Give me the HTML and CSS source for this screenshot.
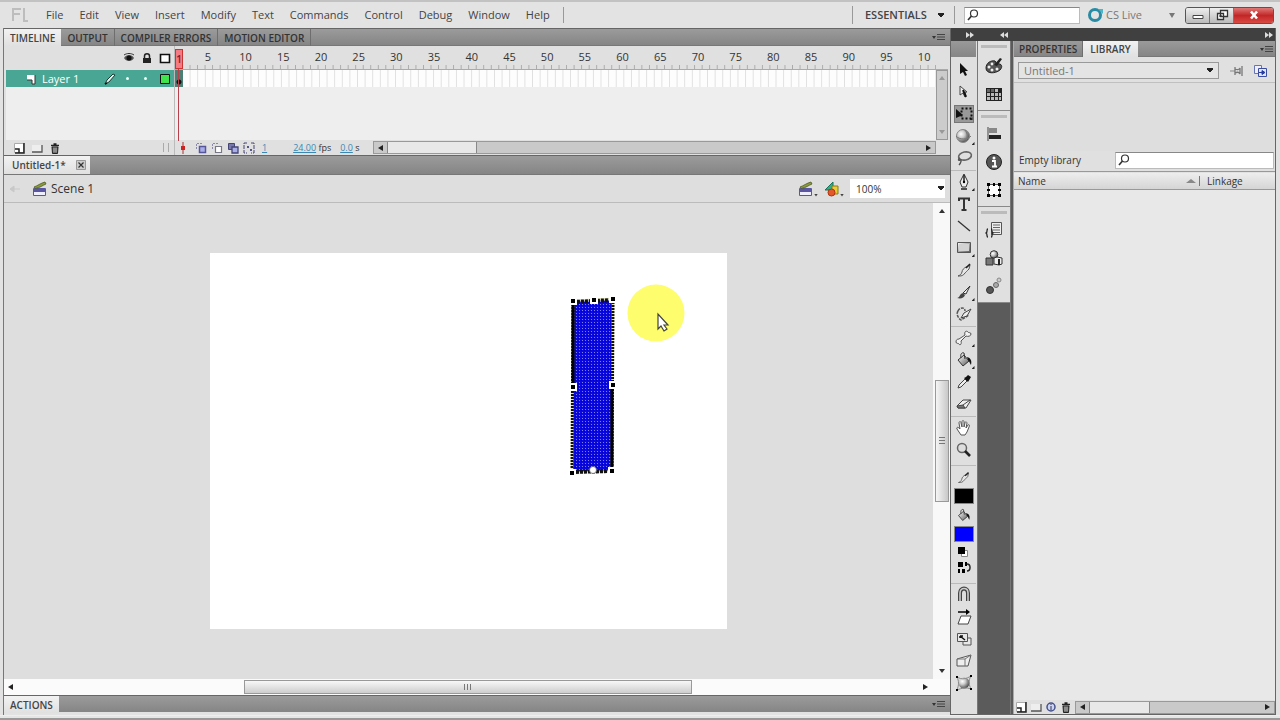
FILE: index.html
```html
<!DOCTYPE html>
<html lang="en">
<head>
<meta charset="utf-8">
<title>Untitled-1</title>
<link rel="stylesheet" href="styles.css">
</head>
<body>
<svg class="defs" aria-hidden="true">
  <defs>
    <linearGradient id="steel" x1="0" y1="0" x2="1" y2="1"><stop offset="0" stop-color="#fff"/><stop offset="1" stop-color="#555"/></linearGradient>
    <radialGradient id="ball" cx=".35" cy=".35" r=".7"><stop offset="0" stop-color="#fff"/><stop offset=".4" stop-color="#ccc"/><stop offset="1" stop-color="#444"/></radialGradient>
    <pattern id="dots" width="3" height="3" patternUnits="userSpaceOnUse"><rect width="3" height="3" fill="#0a08e0"/><rect width="1" height="1" fill="#7d7df6"/><rect x="2" y="1" width="1" height="1" fill="#0500b4"/></pattern>
    <symbol id="mag" viewBox="0 0 14 14"><circle cx="8" cy="5.500" r="3.500" fill="#fff" stroke="#333" stroke-width="1.200"/><path d="M5.500 8 2 12" stroke="#333" stroke-width="1.700"/></symbol>
    <symbol id="flyout" viewBox="0 0 14 10"><path d="M0 4h4L2 7z" fill="#333"/><path d="M5 2.500h8M5 5h8M5 7.500h8" stroke="#444"/></symbol>
    <symbol id="newlayer" viewBox="0 0 12 12"><path d="M1.500 1.500h9v9h-9z" fill="#fff" stroke="#aaa"/><path d="M2 11h9V1" fill="none" stroke="#222" stroke-width="1.500"/><path d="M2 7h4v4" fill="none" stroke="#222" stroke-width="1.500"/></symbol>
    <symbol id="folder" viewBox="0 0 12 12"><path d="M1 3h10v7H1z" fill="#eee"/><path d="M1 10h10V3" fill="none" stroke="#555" stroke-width="1.300"/></symbol>
    <symbol id="trash" viewBox="0 0 12 12"><path d="M2 3.500h8M4.500 2h3" stroke="#222" stroke-width="1.300"/><path d="M3 5h6l-.500 6.500h-5z" fill="#555" stroke="#222"/><path d="M5 5.500v5M7 5.500v5" stroke="#ddd" stroke-width=".800"/></symbol>
    <symbol id="clap" viewBox="0 0 16 16"><path d="M1.500 7.500h12v7h-12z" fill="#eef" stroke="#5b56a3"/><path d="M1 8h13v3H1z" fill="#5b56a3"/><path d="M2 6C5 5 9 2 13 1l1 2C11 4 8 7 3 7.500z" fill="#8a9a3c" stroke="#4d591d" stroke-width=".800"/></symbol>
    <symbol id="pencil" viewBox="0 0 18 18"><path d="M3 15c2-1 3-1 4-4 0-2 2-4 4-5l4-2-1 4c-2 2-3 3-4 4-2 3-4 3-7 3z" fill="#e6e6e6" stroke="#555"/><path d="m11 7 4-4" stroke="#222" stroke-width="1.600"/></symbol>
    <symbol id="bucket" viewBox="0 0 18 18"><path d="m3 9 6-5 5 6-6 5z" fill="url(#steel)" stroke="#333"/><path d="M6 7c-1-4 1-6 3-5l1 6" fill="none" stroke="#333"/><path d="M12 6c4 1 5 4 4 8-1-1-1-3-3-5z" fill="#111"/></symbol>
  </defs>
</svg>

<header class="menubar">
  <svg class="logo" viewBox="0 0 18 16"><path d="M2 14V2h8M2 7h7M13 1v13h4" fill="none" stroke="#bdbdbd" stroke-width="2"/></svg>
  <nav class="menus">
    <button>File</button><button>Edit</button><button>View</button><button>Insert</button><button>Modify</button><button>Text</button><button>Commands</button><button>Control</button><button>Debug</button><button>Window</button><button>Help</button>
  </nav>
  <div class="bar-end">
    <select class="workspace" aria-label="Workspace"><option>ESSENTIALS</option></select>
    <label class="search top-search"><svg><use href="#mag"/></svg><input type="text" aria-label="Search help"></label>
    <button class="cslive"><svg viewBox="0 0 18 18"><circle cx="8" cy="9" r="5.500" fill="none" stroke="#278ba3" stroke-width="3"/><path d="M11 3h5v5z" fill="#4fb4c7"/></svg>CS Live<i class="caret"></i></button>
    <div class="window-buttons">
      <button aria-label="Minimize"><svg viewBox="0 0 16 12"><path d="M3 6.500h10v3H3z" fill="#fff" stroke="#444"/></svg></button>
      <button aria-label="Restore"><svg viewBox="0 0 16 12"><path d="M6.500 1.500h7v6h-7zM3.500 4.500h6v6h-6z" fill="#fff" stroke="#333" stroke-width="1.300"/><path d="M5 7h3" stroke="#333"/></svg></button>
      <button class="close" aria-label="Close"><svg viewBox="0 0 16 12"><path d="m5 2.500 6 7m0-7-6 7" stroke="#fff" stroke-width="2.600"/></svg></button>
    </div>
  </div>
</header>

<div class="workarea">
  <main class="editor">
    <div class="tabbar">
      <button class="tab active">TIMELINE</button><button class="tab">OUTPUT</button><button class="tab">COMPILER ERRORS</button><button class="tab">MOTION EDITOR</button>
      <button class="flyout" aria-label="Panel menu"><svg><use href="#flyout"/></svg></button>
    </div>

    <section class="timeline">
      <div class="layers">
        <div class="layer-head">
          <svg viewBox="0 0 12 12"><path d="M1 6c2-4 8-4 10 0-2 4-8 4-10 0z" fill="#555"/><circle cx="6" cy="6" r="2.500" fill="#111"/><path d="M1 3c3-2 7-2 10 0" fill="none" stroke="#333"/></svg>
          <svg viewBox="0 0 12 12"><path d="M2 6h8v5H2z" fill="#222"/><path d="M3.500 6V4c0-3 5-3 5 0v2" fill="none" stroke="#222" stroke-width="1.500"/></svg>
          <svg viewBox="0 0 12 12"><path d="M1.500 2.500h9v8h-9z" fill="#fff" stroke="#111" stroke-width="1.600"/></svg>
        </div>
        <div class="layer">
          <svg class="page" viewBox="0 0 12 12"><path d="M2 2h8v9H7V7H2z" fill="#fff"/><path d="M10 2v9H7V7H2" fill="none" stroke="#333"/></svg>
          <span class="layer-name">Layer 1</span>
          <svg viewBox="0 0 12 12"><path d="m1 11 2-4 6-6 2 1-6 7z" fill="#e5f1ed" stroke="#153d34"/><path d="m1 11 2-1" stroke="#111" stroke-width="1.500"/></svg>
          <i class="dot"></i><i class="dot"></i>
          <svg viewBox="0 0 12 12"><path d="M1.500 1.500h9v9h-9z" fill="#3fe34b" stroke="#111"/></svg>
        </div>
        <div class="layer-foot">
          <button aria-label="New layer"><svg><use href="#newlayer"/></svg></button>
          <button aria-label="New folder"><svg><use href="#folder"/></svg></button>
          <button aria-label="Delete"><svg><use href="#trash"/></svg></button>
          <i class="splitter"></i>
        </div>
      </div>
      <div class="frames">
        <div class="ruler">
          <span>5</span><span>10</span><span>15</span><span>20</span><span>25</span><span>30</span><span>35</span><span>40</span><span>45</span><span>50</span><span>55</span><span>60</span><span>65</span><span>70</span><span>75</span><span>80</span><span>85</span><span>90</span><span>95</span><span>10</span>
          <div class="ticks"></div>
        </div>
        <div class="frame-body">
          <div class="frame-main">
            <div class="frame-row"><i class="keyframe"></i></div>
          </div>
          <div class="slim-scroll"><svg viewBox="0 0 8 8"><path d="M1 6h6L4 2z"/></svg><svg viewBox="0 0 8 8"><path d="M1 2h6L4 6z"/></svg></div>
        </div>
        <div class="playhead"><b>1</b></div>
        <div class="frame-foot">
          <svg viewBox="0 0 12 12"><path d="M6 0v12" stroke="#a33"/><path d="M4 4h4v4H4z" fill="#c22"/></svg>
          <svg viewBox="0 0 12 12"><path d="M1.500 7V1.500H8" fill="none" stroke="#88a" stroke-dasharray="2 1"/><path d="M4.500 4.500h6v6h-6z" fill="#aaaee6" stroke="#56569c" stroke-width="1.500"/></svg>
          <svg viewBox="0 0 12 12"><path d="M1.500 7V1.500H8" fill="none" stroke="#88a" stroke-dasharray="2 1"/><path d="M4.500 4.500h6v6h-6z" fill="#fff" stroke="#778" stroke-width="1.200"/></svg>
          <svg viewBox="0 0 12 12"><path d="M1.500 1.500h6v6h-6z" fill="#77a" stroke="#447"/><path d="M5 5h6v6H5z" fill="#aaaee6" stroke="#447" stroke-width="1.300"/></svg>
          <svg viewBox="0 0 12 12"><path d="M4 1H1v10h3M8 1h3v10H8" fill="none" stroke="#447" stroke-dasharray="4 1"/><path d="M4 4h2v2H4zm3 3h2v2H7z" fill="#558"/></svg>
          <button class="value current">1</button>
          <span class="reading"><button class="value">24.00</button> fps</span>
          <span class="reading"><button class="value">0.0</button> s</span>
          <div class="flat-scroll"><i class="arrow left"></i><i class="thumb"></i><i class="arrow right"></i></div>
        </div>
      </div>
    </section>

    <div class="tabbar doc-tabs">
      <div class="tab active">Untitled-1*<button aria-label="Close document"><svg viewBox="0 0 10 10"><path d="M.500.500h9v9h-9z" fill="#ccc" stroke="#999"/><path d="m2.500 2.500 5 5m0-5-5 5" stroke="#333" stroke-width="1.200"/></svg></button></div>
    </div>

    <div class="scenebar">
      <svg class="back" viewBox="0 0 12 12"><path d="M0 6h10M0 6l4-3v6z" stroke="#c8c8c8" fill="#c8c8c8"/></svg>
      <svg><use href="#clap"/></svg>
      <span>Scene 1</span>
      <button class="scene-pick" aria-label="Edit scene"><svg><use href="#clap"/></svg><i></i></button>
      <button class="scene-pick" aria-label="Edit symbols"><svg viewBox="0 0 16 16"><path d="M1 9 9 1v8z" fill="#2fae86" stroke="#187257"/><path d="M8 5h6v8H8z" fill="#e6cf33" stroke="#8b7b1a"/><circle cx="7.500" cy="11.500" r="3.500" fill="#e4592c" stroke="#a83613"/></svg><i></i></button>
      <select class="zoom" aria-label="Zoom"><option>100%</option></select>
    </div>

    <div class="stage-wrap">
      <div class="stage">
        <div class="canvas">
          <svg viewBox="0 0 517 376">
            <path d="m364 48 38-1-1 171-38 1z" fill="url(#dots)"/>
            <path d="m363 48 40-2-1 172-40 2z" fill="none" stroke="#d8d890" stroke-width="3" opacity=".6"/>
            <path d="m363 48-1 172" stroke="#111" stroke-width="3" stroke-dasharray="2 1"/>
            <path d="m403 46-1 172" stroke="#111" stroke-width="3" stroke-dasharray="2 1"/>
            <path d="M363 50v81M402 136v80" stroke="#000" stroke-width="3"/>
            <path d="m363 49 40-2M362 219l40-1" stroke="#111" stroke-width="4" stroke-dasharray="3 1"/>
            <g fill="#000" stroke="#fff" stroke-width="2"><path d="M360 45h6v6h-6zM381 44h6v6h-6zM400 43h6v6h-6zM360 131h6v6h-6zM400 129h6v6h-6zM359 217h6v6h-6zM399 215h6v6h-6z"/></g>
            <circle cx="383" cy="217" r="3.500" fill="#fff" stroke="#555" stroke-width=".700"/>
            <circle cx="446" cy="60" r="28.500" fill="#fdfd6e"/>
            <path d="m448 61v15l3-3 3 5 3-2-3-4h4z" fill="#fff" stroke="#443" stroke-width="1.200"/>
          </svg>
        </div>
      </div>
      <div class="vscroll"><i class="arrow up"></i><i class="space before"></i><i class="thumb"></i><i class="space after"></i><i class="arrow down"></i></div>
    </div>
    <div class="hscroll"><i class="arrow left"></i><i class="space before"></i><i class="thumb"></i><i class="space after"></i><i class="arrow right"></i></div>

    <div class="tabbar actions"><button class="tab active">ACTIONS</button><button class="flyout" aria-label="Panel menu"><svg><use href="#flyout"/></svg></button></div>
  </main>

  <aside class="dock">
    <div class="strip">
      <svg viewBox="0 0 8 6"><path d="M0 0v6l4-3zM4 0v6l4-3z" fill="#ddd"/></svg>
      <svg viewBox="0 0 8 6"><path d="M4 0v6L0 3zM8 0v6L4 3z" fill="#ddd"/></svg>
      <svg class="last" viewBox="0 0 8 6"><path d="M0 0v6l4-3zM4 0v6l4-3z" fill="#ddd"/></svg>
    </div>

    <div class="columns">
    <div class="tools">
      <div class="tool-head"></div>
      <div class="group">
        <button aria-label="Selection"><svg viewBox="0 0 18 18"><path d="M5 2v11l3-2 2 4 2-1-2-4h3z" fill="#111"/></svg></button>
        <button aria-label="Subselection"><svg viewBox="0 0 18 18"><path d="M5 3v9l3-2 2 4 1-1-1-4h2z" fill="#eee" stroke="#444"/><path d="m8 7 3 7" stroke="#111" stroke-width="2"/></svg></button>
        <button class="on more" aria-label="Free transform"><svg viewBox="0 0 18 18"><path d="M1 4v9l7-3z" fill="#111"/><path d="M6.500 3.500h10v10h-10z" fill="none" stroke="#111" stroke-width="2" stroke-dasharray="2 2"/></svg></button>
        <button class="more" aria-label="3D rotation"><svg viewBox="0 0 18 18"><circle cx="8" cy="9" r="6.500" fill="url(#ball)" stroke="#888"/><path d="M1 9c3 4 12 4 15 0" fill="none" stroke="#777"/><path d="M10 3c3 4 3 8 0 12" fill="none" stroke="#777"/></svg></button>
        <button aria-label="Lasso"><svg viewBox="0 0 18 18"><ellipse cx="10" cy="7" rx="6.500" ry="4" transform="rotate(-12 10 7)" fill="none" stroke="#666" stroke-width="1.600"/><path d="M5 9c-2 1-2 3 0 2s1 3-1 5" fill="none" stroke="#555" stroke-width="1.400"/></svg></button>
      </div>
      <div class="group">
        <button class="more" aria-label="Pen"><svg viewBox="0 0 18 18"><path d="M9 1 5 9l2 5h4l2-5z" fill="#eee" stroke="#333"/><path d="M9 2v7M6 16h6" stroke="#222" stroke-width="1.500"/><circle cx="9" cy="9" r="1.200"/></svg></button>
        <button aria-label="Text"><svg viewBox="0 0 18 18"><path d="M4 6V3.500h10V6M9 4v11M6.500 15h5" fill="none" stroke="#333" stroke-width="2"/></svg></button>
        <button aria-label="Line"><svg viewBox="0 0 18 18"><path d="m3 4 12 10" stroke="#333" stroke-width="1.300"/></svg></button>
        <button class="more" aria-label="Rectangle"><svg viewBox="0 0 18 18"><path d="M2.500 3.500h13v10h-13z" fill="url(#steel)" stroke="#555"/><path d="M4 5h10v7H4z" fill="#d2d2d2"/></svg></button>
        <button aria-label="Pencil"><svg><use href="#pencil"/></svg></button>
        <button class="more" aria-label="Brush"><svg viewBox="0 0 18 18"><path d="m8 10 7-7-4 8z" fill="#eee" stroke="#333"/><path d="M2 15c3 0 2-4 6-5l2 2c-1 3-4 4-8 3z" fill="#444"/></svg></button>
        <button aria-label="Deco"><svg viewBox="0 0 18 18"><path d="M3 6c2-4 7-4 7 0M3 6c-2 3 0 7 3 9l8-5" fill="none" stroke="#555" stroke-width="1.500" stroke-dasharray="3 1"/><path d="m6 13 3-5 7-4-4 7z" fill="#eee" stroke="#444"/></svg></button>
      </div>
      <div class="group">
        <button class="more" aria-label="Bone"><svg viewBox="0 0 18 18"><path d="M4 10 10 6c-1-3 1-5 3-3 0 1 3 0 3 2s-3 3-5 2l-5 5c1 3-1 5-2 3 0-1-3 0-3-2s1-3 3-3z" fill="#f2f2f2" stroke="#555"/></svg></button>
        <button class="more" aria-label="Paint bucket"><svg><use href="#bucket"/></svg></button>
        <button aria-label="Eyedropper"><svg viewBox="0 0 18 18"><path d="m3 15 1-3 6-6 2 2-6 6z" fill="#eee" stroke="#444"/><path d="m9 5 4 4 3-5-3-2-2 2z" fill="#111"/></svg></button>
        <button aria-label="Eraser"><svg viewBox="0 0 18 18"><path d="m2 11 6-6h8l-5 8H3z" fill="#eee" stroke="#444"/><path d="m2 11 6-1 2 3H3zM8 10l7-5" fill="#777" stroke="#444"/></svg></button>
      </div>
      <div class="group view">
        <button aria-label="Hand"><svg viewBox="0 0 18 18"><path d="M6 16 2 10c-1-2 1-2 2-1l1 1-1-6c0-2 2-2 2 0l1 4V3c0-2 2-2 2 0v5l1-4c0-2 2-1 2 0l-1 5 2-3c1-1 2 0 1 2l-2 5-2 3z" fill="#fff" stroke="#555"/></svg></button>
        <button aria-label="Zoom"><svg viewBox="0 0 18 18"><circle cx="7" cy="7" r="4.500" fill="#ddd" stroke="#666" stroke-width="1.500"/><path d="m10 10 5 5" stroke="#222" stroke-width="2.600"/></svg></button>
      </div>
      <div class="group colors">
        <button aria-label="Stroke color"><svg class="small"><use href="#pencil"/></svg></button>
        <button class="swatch black" aria-label="Stroke swatch"></button>
        <button aria-label="Fill color"><svg class="small"><use href="#bucket"/></svg></button>
        <button class="swatch blue" aria-label="Fill swatch"></button>
        <button class="short" aria-label="Black and white"><svg viewBox="0 0 18 18"><path d="M6.500 8.500h6v6h-6z" fill="#fff" stroke="#888"/><path d="M3 5h7v7H3z"/></svg></button>
        <button class="short" aria-label="Swap colors"><svg viewBox="0 0 18 18"><path d="M3 3h5v5H3zM10 3h2v4h-2zM3 10h2v4H3zM7 10h3v4H7z"/><path d="M12 5c4 0 4 7 0 7" fill="none" stroke="#222" stroke-width="1.500"/></svg></button>
      </div>
      <div class="group">
        <button aria-label="Snap"><svg viewBox="0 0 18 18"><path d="M5 15V7c0-6 8-6 8 0v8" fill="none" stroke="#444" stroke-width="4"/><path d="M5 15V7c0-6 8-6 8 0v8" fill="none" stroke="#ccc" stroke-width="1.600"/></svg></button>
        <button aria-label="Skew"><svg viewBox="0 0 18 18"><path d="m6 8h10l-3 8H3z" fill="#fff" stroke="#444"/><path d="M3 4h9" stroke="#111" stroke-width="1.600"/><path d="M11 1v6l4-3z"/></svg></button>
        <button aria-label="Scale"><svg viewBox="0 0 18 18"><path d="M2.500 3.500h10v8h-10zM12 8h4v7H8v-3" fill="#e8e8e8" stroke="#555"/><path d="m5 6 5 4M5 6h3M5 6v2" stroke="#111" stroke-width="1.500"/></svg></button>
        <button aria-label="Distort"><svg viewBox="0 0 18 18"><path d="m2 7 14-4-3 11H2z" fill="#eee" stroke="#555"/><path d="M2 7h8v7M10 7l6-4" fill="none" stroke="#777"/></svg></button>
        <button aria-label="Envelope"><svg viewBox="0 0 18 18"><circle cx="9" cy="9" r="5.500" fill="url(#ball)"/><path d="M2 3c5 3 9 2 14-1-3 5-2 9 0 13-5-2-9-1-14 1 2-5 2-9 0-13z" fill="none" stroke="#888"/><path d="M1 2h2v2H1zM15 1h2v2h-2zM1 15h2v2H1zM15 14h2v2h-2z"/></svg></button>
      </div>
    </div>

    <div class="iconbar">
      <div class="icon-group">
        <button aria-label="Color"><svg viewBox="0 0 18 18"><path d="M1 11c0-5 5-8 9-7 2 1 0 3 2 3 5-1 6 3 3 6-5 4-14 4-14-2z" fill="#555" stroke="#222"/><path d="m9 8 6-7 2 1-5 7z" fill="#222"/><g fill="#eee"><circle cx="4" cy="10" r="1.500"/><circle cx="7" cy="7" r="1.400"/><circle cx="7" cy="13" r="1.500"/><circle cx="12" cy="12" r="1.500"/></g></svg></button>
        <button aria-label="Swatches"><svg viewBox="0 0 18 18"><path d="M1 3h16v13H1z" fill="#222"/><path d="M2 8h3v3H2zM6 8h3v3H6zM10 8h3v3h-3zM14 8h2v3h-2zM2 12h3v3H2zM6 12h3v3H6zM10 12h3v3h-3zM14 12h2v3h-2zM10 4h3v3h-3z" fill="#bbb"/><path d="M2 4h3v3H2zM6 4h3v3H6z" fill="#666"/></svg></button>
      </div>
      <div class="icon-group">
        <button aria-label="Align"><svg viewBox="0 0 18 18"><path d="M3 2v14" stroke="#444"/><path d="M4 3h8v5H4z" fill="#888"/><path d="M4 10h12v4H4z" fill="#222"/></svg></button>
        <button aria-label="Info"><svg viewBox="0 0 18 18"><circle cx="9" cy="9" r="7.500" fill="#555" stroke="#222"/><circle cx="9" cy="5" r="1.500" fill="#fff"/><path d="M7 8h3v5M7 13.500h5" fill="none" stroke="#fff" stroke-width="1.800"/></svg></button>
        <button aria-label="Transform"><svg viewBox="0 0 18 18"><path d="M4 4h10v10H4z" fill="#fff"/><path d="M3.500 3.500h11v11h-11z" fill="none" stroke="#555"/><path d="M2 2h3v3H2zM8 2h2v3H8zM13 2h3v3h-3zM2 8h3v2H2zM13 8h3v2h-3zM2 13h3v3H2zM8 13h2v3H8zM13 13h3v3h-3z"/></svg></button>
      </div>
      <div class="icon-group">
        <button aria-label="Code snippets"><svg viewBox="0 0 18 18"><path d="M6.500 1.500h10v12h-10z" fill="#eee" stroke="#555"/><path d="M8 4h7M8 6.500h7M8 9h7M8 11.500h7" stroke="#666"/><path d="M3 8c-2 0 0 3-2 4 2 1 0 4 2 4M6 8c2 0 0 3 2 4-2 1 0 4-2 4" fill="none" stroke="#222" stroke-width="1.300"/></svg></button>
        <button aria-label="Components"><svg viewBox="0 0 18 18"><circle cx="9" cy="5.500" r="3.800" fill="url(#ball)" stroke="#333"/><path d="M1 9h7v7H1z" fill="#777" stroke="#333"/><path d="m9 9 3-1 5 1v6l-3 1-5-1z" fill="#eee" stroke="#333"/><path d="M14 10v6" stroke="#222" stroke-width="2"/></svg></button>
        <button aria-label="Motion presets"><svg viewBox="0 0 18 18"><circle cx="5" cy="13" r="3.500" fill="#555" stroke="#333"/><circle cx="11" cy="8" r="2.500" fill="#aaa" stroke="#666"/><circle cx="14" cy="3" r="2" fill="#ccc" stroke="#888"/></svg></button>
      </div>
    </div>

    <section class="library">
      <div class="tabbar"><button class="tab">PROPERTIES</button><button class="tab active">LIBRARY</button><button class="flyout" aria-label="Panel menu"><svg><use href="#flyout"/></svg></button></div>
      <div class="lib-file">
        <select aria-label="Document"><option>Untitled-1</option></select>
        <button aria-label="Pin"><svg viewBox="0 0 14 14"><path d="M1 7h5" stroke="#888"/><path d="M6 3v8M6 5c2 1 4 1 5-1v6c-1-2-3-2-5-1M13 2v10" fill="none" stroke="#777" stroke-width="1.300"/></svg></button>
        <button aria-label="New library"><svg viewBox="0 0 14 14"><path d="M1.500 1.500h7v8h-7z" fill="#eef" stroke="#6673b5"/><path d="M5.500 4.500h8v8h-8z" fill="#dfe4ff" stroke="#3c4d9e"/><path d="M6 8.500h5M9 6.500l3 2-3 2z" stroke="#273da0" fill="#273da0"/></svg></button>
      </div>
      <div class="preview"></div>
      <div class="lib-search"><label for="find">Empty library</label><div class="search"><svg><use href="#mag"/></svg><input id="find" type="text"></div></div>
      <table><thead><tr><th class="name">Name<i class="sort"></i></th><th>Linkage</th></tr></thead></table>
      <div class="items"></div>
      <div class="lib-foot">
        <button aria-label="New symbol"><svg><use href="#newlayer"/></svg></button>
        <button aria-label="New folder"><svg><use href="#folder"/></svg></button>
        <button aria-label="Properties"><svg viewBox="0 0 12 12"><circle cx="6" cy="6" r="4" fill="#ccd4f4" stroke="#445089" stroke-width="1.500"/><path d="M6 5v4M6 3v1" stroke="#335"/></svg></button>
        <button aria-label="Delete"><svg><use href="#trash"/></svg></button>
        <div class="flat-scroll"><i class="arrow left"></i><i class="thumb"></i><i class="arrow right"></i></div>
      </div>
    </section>
    </div>
  </aside>
</div>
<footer class="bottom-edge"></footer>
</body>
</html>
```

FILE: styles.css
```css
* { box-sizing: border-box; }
body {
  margin: 0;
  height: 100vh;
  display: flex;
  flex-direction: column;
  overflow: hidden;
  background: #e2e2e2;
  font: 11px/16px "Open Sans", "Noto Sans", sans-serif;
  color: #333;
}
button, input, select { font: inherit; color: inherit; margin: 0; padding: 0; border: 0; background: none; border-radius: 0; }
button { display: flex; align-items: center; justify-content: center; }
select { appearance: none; }
svg { display: block; flex: none; width: 12px; height: 12px; }
.defs { position: absolute; width: 0; height: 0; }

/* menu bar */
.menubar { flex: none; height: 28px; display: flex; align-items: center; padding: 0 6px 0 11px; border-top: 2px solid #c2c2c2; background: #e3e3e3; color: #444; }
.logo { width: 18px; height: 16px; }
.menus { display: flex; gap: 16px; padding: 0 13px 0 17px; border-right: 1px solid #999; }
.bar-end { margin-left: auto; display: flex; align-items: center; }
.workspace { width: 103px; height: 18px; padding-left: 12px; border: 1px solid #999; border-width: 0 1px; font-weight: 600; }
.search { display: flex; align-items: center; background: #fff; border: 1px solid #bbb; border-top-color: #888; }
.search svg { width: 14px; height: 14px; margin-left: 1px; }
.search input { flex: 1; min-width: 0; height: 14px; outline: 0; }
.top-search { width: 116px; height: 17px; margin-left: 9px; }
.cslive { margin-left: 7px; gap: 1px; color: #777; }
.cslive svg { width: 18px; height: 18px; }
.caret { margin-left: 26px; border: 3px solid transparent; border-top: 5px solid #777; border-bottom: 0; }
.window-buttons { display: flex; margin-left: 10px; border: 1px solid #555; border-radius: 3px; overflow: hidden; }
.window-buttons button { width: 24px; height: 15px; background: linear-gradient(#eee, #bbb); border-right: 1px solid #777; }
.window-buttons svg { width: 16px; height: 12px; }
.window-buttons .close { width: 39px; border: 0; background: linear-gradient(#de7875, #c32628 50%, #d84a42); }
.workspace, .zoom, .lib-file select { background: conic-gradient(from -36deg at 50% 100%, #222 0 72deg, transparent 0) no-repeat right 9px center / 8px 5px; }

.workarea { flex: 1; min-height: 0; display: flex; padding: 0 4px 0 3px; }
.editor { flex: 1; min-width: 0; display: flex; flex-direction: column; border-left: 1px solid #777; }

/* tab bars */
.tabbar { flex: none; display: flex; height: 18px; background: linear-gradient(#9b9b9b, #858585); border-top: 1px solid #666; border-bottom: 1px solid #777; font-size: 10px; font-weight: 600; }
.tab { height: 17px; padding: 0 6px; border-right: 1px solid #6e6e6e; color: #333; }
.tab.active { background: linear-gradient(#f2f2f2, #e0e0e0); border-right: 0; color: #444; }
.flyout { margin: 0 4px 0 auto; }
.flyout svg { width: 14px; height: 10px; }

/* timeline */
.timeline { flex: none; height: 109px; display: flex; padding: 0 2px; background: #e0e0e0; }
.layers { width: 169px; display: flex; flex-direction: column; border-right: 1px solid #bbb; background: #eee; }
.layer-head { height: 24px; display: flex; align-items: center; justify-content: flex-end; gap: 6px; padding-right: 3px; background: #e0e0e0; }
.layer { height: 17px; display: flex; align-items: center; padding: 0 3px 0 19px; background: #4aa694; color: #fff; line-height: 14px; }
.layer-name { flex: 1; margin-left: 5px; }
.dot { width: 3px; height: 3px; margin: 0 5px 0 10px; border-radius: 2px; background: #e8fff8; }
.dot + .dot { margin: 0 12px 0 10px; }
.layer-foot { margin-top: auto; height: 15px; display: flex; align-items: center; gap: 6px; padding: 0 5px 0 7px; background: #e0e0e0; }
.splitter { margin-left: auto; width: 6px; height: 9px; border: 1px solid #aaa; border-width: 0 1px; }
.frames { position: relative; flex: 1; min-width: 0; display: flex; flex-direction: column; }
.ruler { position: relative; height: 24px; display: grid; grid-template-columns: repeat(20, 1fr); padding: 3px 5px 0 14px; border-bottom: 1px solid #aaa; text-align: center; }
.ticks { position: absolute; left: 7px; right: 12px; bottom: 0; height: 4px; background: linear-gradient(90deg, #aaa 1px, transparent 1px) 0 0 / 1% 100%; }
.frame-body { flex: 1; display: flex; background: #eee; }
.frame-main { flex: 1; }
.frame-row { height: 17px; background: linear-gradient(90deg, #e0e0e0 1px, transparent 1px) 7px 0 / 1% 100%, #fdfdfd; }
.keyframe { display: block; width: 8px; height: 17px; background: radial-gradient(circle at 4px 12px, #111 2px, #4c7f74 3px); }
.playhead { position: absolute; left: 0; top: 3px; width: 8px; height: 92px; background: linear-gradient(#b8404c, #b8404c) 3px 0 / 1px 100% no-repeat; }
.playhead b { display: block; height: 20px; border: 1px solid #c33; background: #f47b84; color: #8c1820; font-size: 10px; font-weight: 600; line-height: 18px; text-align: center; }
.slim-scroll { width: 12px; display: flex; flex-direction: column; align-items: center; justify-content: space-between; padding: 3px 0; border: 1px solid #999; background: #ccc; }
.slim-scroll svg { width: 8px; height: 8px; fill: #999; }
.frame-foot { height: 15px; display: flex; align-items: center; gap: 4px; padding: 0 12px 0 2px; font-size: 9px; }
.frame-foot > svg:first-child { margin-right: 2px; }
.value { display: inline; color: #3989b3; text-decoration: underline; }
.current { margin: 0 22px 0 3px; }
.reading { width: 43px; white-space: nowrap; }
.reading + .reading { width: 29px; }
.flat-scroll { flex: 1; display: flex; align-items: center; height: 13px; border: 1px solid #999; background: #c9c9c9; }
.flat-scroll .thumb { width: 16%; height: 11px; margin-left: 4px; background: #e8e8e8; border: 1px solid #888; border-width: 0 1px; }

/* shared arrows */
.arrow { flex: none; width: 0; height: 0; border: 3px solid transparent; }
.arrow.left { margin-left: 4px; border-right: 5px solid #222; border-left: 0; }
.arrow.right { margin-left: auto; margin-right: 4px; border-left: 5px solid #222; border-right: 0; }
.arrow.up { border-bottom: 4px solid #333; border-top: 0; }
.arrow.down { border-top: 4px solid #333; border-bottom: 0; }

.doc-tabs { height: 20px; }
.doc-tabs .tab { display: flex; align-items: center; gap: 10px; height: 18px; padding: 0 4px 0 8px; }
.doc-tabs svg { width: 10px; height: 10px; }

.scenebar { flex: none; height: 28px; display: flex; align-items: center; padding: 0 5px 0 6px; border-bottom: 1px solid #bbb; background: #dedede; font-size: 12px; }
.scenebar svg { width: 16px; height: 16px; }
.scenebar .back { width: 12px; height: 12px; margin-right: 10px; }
.scenebar span { margin: 0 auto 0 3px; }
.scene-pick { align-items: flex-end; margin-right: 6px; }
.scene-pick i { width: 4px; height: 3px; background: #444; clip-path: polygon(0 0, 100% 0, 50% 100%); }
.zoom { width: 95px; height: 19px; padding-left: 6px; background-color: #fff; background-position: right 0 center; font-size: 10px; }

/* stage */
.stage-wrap { flex: 1; min-height: 0; display: flex; }
.stage { flex: 1; display: flex; align-items: center; justify-content: center; background: #dedede; }
.canvas { width: 517px; height: 376px; background: #fff; }
.canvas svg { width: 100%; height: 100%; }
.vscroll { width: 17px; display: flex; flex-direction: column; align-items: center; padding: 6px 0; background: #f8f8f8; }
.hscroll { flex: none; height: 16px; display: flex; align-items: center; padding: 0 18px 0 0; background: #fbfbfb; }
.before, .after { flex: 1; }
.vscroll .before, .vscroll .after { flex: 166; }
.vscroll .thumb { flex: 120; width: 14px; border: 1px solid #999; background: repeating-linear-gradient(#777 0 1px, transparent 1px 3px) center / 6px 8px no-repeat, linear-gradient(90deg, #f5f5f5, #c8c8c8); }
.hscroll .before, .hscroll .after { flex: 227; }
.hscroll .thumb { flex: 438; height: 14px; border: 1px solid #999; background: repeating-linear-gradient(90deg, #777 0 1px, transparent 1px 3px) center / 8px 6px no-repeat, linear-gradient(#f8f8f8, #cdcdcd); }
.actions { height: 17px; margin-bottom: 3px; border-bottom: 0; }

/* dock */
.dock { flex: none; width: 326px; display: flex; flex-direction: column; border: 1px solid #666; border-width: 0 1px 1px; background: #5b5b5b; }
.strip { flex: none; height: 13px; display: flex; align-items: center; gap: 26px; padding: 0 2px 0 15px; background: #404040; }
.strip svg { width: 8px; height: 6px; }
.strip .last { margin-left: auto; }
.columns { flex: 1; min-height: 0; display: flex; }
.tools { width: 26px; padding-right: 1px; background: #dfdfdf; }
.tool-head { height: 16px; margin-bottom: 2px; background: linear-gradient(#999, #858585); }
.group { display: flex; flex-direction: column; align-items: center; margin-bottom: 1px; }
.group + .group { border-top: 1px solid #bbb; }
.group button { position: relative; width: 22px; height: 22px; }
.group button svg { width: 18px; height: 18px; }
.group button svg.small { width: 15px; height: 15px; }
.group .on { width: 20px; height: 18px; margin: 2px 0; background: #999; border: 1px solid #777; }
.more::after { content: ""; position: absolute; right: 0; bottom: 2px; width: 3px; height: 3px; background: #222; clip-path: polygon(100% 0, 100% 100%, 0 100%); }
.view { padding-bottom: 3px; }
.colors { padding: 0 0 6px; }
.group .swatch { width: 20px; height: 16px; border: 1px solid #888; }
.group .short { height: 17px; }
.black { background: #000; }
.blue { background: #00f; }
.iconbar { width: 34px; border: 1px solid #777; border-width: 0 1px; }
.icon-group { display: flex; flex-direction: column; align-items: center; gap: 6px; padding: 12px 0 5px; border-bottom: 1px solid #888; background: linear-gradient(#bbb, #bbb) center 4px / 26px 3px no-repeat, #e0e0e0; }
.icon-group button { height: 22px; }
.icon-group svg { width: 18px; height: 18px; }
.icon-group:first-child { padding-top: 14px; }

/* library */
.library { flex: 1; min-width: 0; display: flex; flex-direction: column; margin-left: 2px; border-left: 1px solid #aaa; background: #e0e0e0; }
.library .tabbar { height: 16px; border-top: 0; }
.library .tab { height: 16px; padding: 0 5px; }
.library .tab.active { padding: 0 7px; }
.library .flyout { margin-right: 1px; }
.lib-file { display: flex; align-items: center; gap: 10px; padding: 5px 8px 3px 4px; border-bottom: 1px solid #c0c0c0; }
.lib-file select { flex: 1; height: 17px; padding-left: 5px; border: 1px solid #999; background-position: right 4px center; background-color: #e4e4e4; color: #777; }
.lib-file svg { width: 14px; height: 14px; }
.preview { height: 68px; background: #dedede; }
.lib-search { display: flex; align-items: center; justify-content: space-between; height: 18px; padding: 0 1px 0 5px; font-size: 10px; }
.lib-search .search { width: 159px; height: 17px; }
table { width: 100%; margin-top: 2px; border-collapse: collapse; table-layout: fixed; font-size: 10px; }
th { height: 18px; padding: 0 4px; text-align: left; font-weight: 400; background: linear-gradient(#eee, #d4d4d4); border: 1px solid #999; border-width: 1px 0; line-height: 14px; }
.name { width: 189px; background: linear-gradient(#777, #777) right 3px center / 1px 10px no-repeat, linear-gradient(#eee, #d4d4d4); }
.sort { float: right; margin: 5px 3px 0 0; border: 5px solid transparent; border-bottom: 4px solid #888; border-top: 0; }
.items { flex: 1; background: #e8e8e8; }
.lib-foot { display: flex; align-items: center; gap: 3px; height: 14px; padding-left: 1px; }
.lib-foot .thumb { width: 31%; }

.bottom-edge { flex: none; height: 5px; border-top: 1px solid #eee; background: linear-gradient(#e5e5e5 2px, #999 2px); }
```
